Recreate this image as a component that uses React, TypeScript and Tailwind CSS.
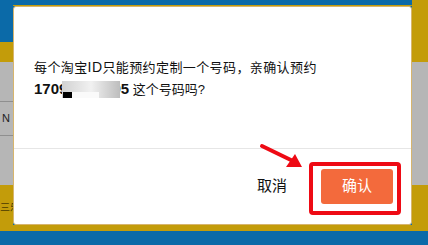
import React from 'react';

const font = { fontFamily: '"Liberation Sans", "Noto Sans CJK SC", sans-serif' };

function LeftStrip() {
  return (
    <div className="flex w-[13px] shrink-0 flex-col">
      <div className="h-[42px] bg-[#0b6aa8]" />
      <div className="h-[20px] bg-[#c39c0a]" />
      <div className="flex h-[123px] flex-col bg-[#b6b6b6]">
        <div className="h-[40px] border-b border-[#8f8f8f]" />
        <div className="flex h-[34px] items-center border-b border-[#8f8f8f] pl-[2px] text-[11px] leading-none text-[#222]">
          N
        </div>
      </div>
      <div className="flex h-[46px] items-center overflow-hidden bg-[#c39c0a] text-[10px] leading-none whitespace-nowrap text-[#4a3a00]">
        三乐
      </div>
      <div className="flex-1 bg-[#0b6aa8]" />
    </div>
  );
}

function RightStrip() {
  return (
    <div className="flex flex-1 flex-col">
      <div className="h-[62px] bg-[#c39c0a]" />
      <div className="h-[123px] bg-[#b6b6b6]" />
      <div className="h-[46px] bg-[#c39c0a]" />
      <div className="flex-1 bg-[#0b6aa8]" />
    </div>
  );
}

function Dialog() {
  return (
    <div className="relative flex h-[219px] flex-col rounded-[3px] border border-[#d7b56d] bg-white">
      <div className="flex flex-1 items-center pl-[20px] pr-[18px] pt-[2px]">
        <p className="text-[13px] leading-[21px] text-[#111]">
          <span className="tracking-[0.4px]">
            每个淘宝<span className="text-[14px]">ID</span>只能预约定制一个号码，亲确认预约
          </span>
          <br />
          <span className="font-bold text-[15px]">1709</span>
          <span className="relative -ml-[5px] inline-block h-[17px] w-[58px] align-[-4px] bg-gradient-to-r from-[#d2d2d2] via-[#f1f1f1] to-[#bdbdbd] blur-[0.6px]">
            <span className="absolute bottom-0 left-[10px] h-[6px] w-[27px] bg-[#fafafa]" />
            <span className="absolute bottom-0 left-[1px] h-[6px] w-[9px] bg-black" />
          </span>
          <span className="-ml-[8px] font-bold text-[15px]">95</span> 这个号码吗?
        </p>
      </div>
      <div className="flex h-[76px] items-center justify-end gap-[34px] border-t border-[#e6e6e6] pr-[18px]">
        <span className="text-[15px] text-[#111]">取消</span>
        <button className="flex h-[35px] w-[72px] items-center justify-center rounded-[3px] bg-[#f36a3c] text-[15px] text-white">
          确认
        </button>
      </div>
      <div className="pointer-events-none absolute left-[295px] top-[155px] h-[53px] w-[92px] rounded-[4px] border-[4px] border-[#ee0a14]" />
      <svg className="pointer-events-none absolute left-[245px] top-[136px]" width="50" height="28" viewBox="0 0 50 28">
        <line x1="3" y1="3" x2="36" y2="19" stroke="#ee0a14" strokeWidth="4" strokeLinecap="round" />
        <polygon points="43,24 27,24 36,11" fill="#ee0a14" />
      </svg>
    </div>
  );
}

export default function App() {
  return (
    <div className="flex h-[245px] w-[428px] overflow-hidden bg-[#0b6aa8]" style={font}>
      <LeftStrip />
      <div className="flex w-[399px] shrink-0 flex-col">
        <div className="h-[6px] border-b border-[#c39c0a] bg-[#0b6aa8]" />
        <Dialog />
        <div className="h-[6px] bg-[#c39c0a]" />
        <div className="flex-1 bg-[#0b6aa8]" />
      </div>
      <RightStrip />
    </div>
  );
}
